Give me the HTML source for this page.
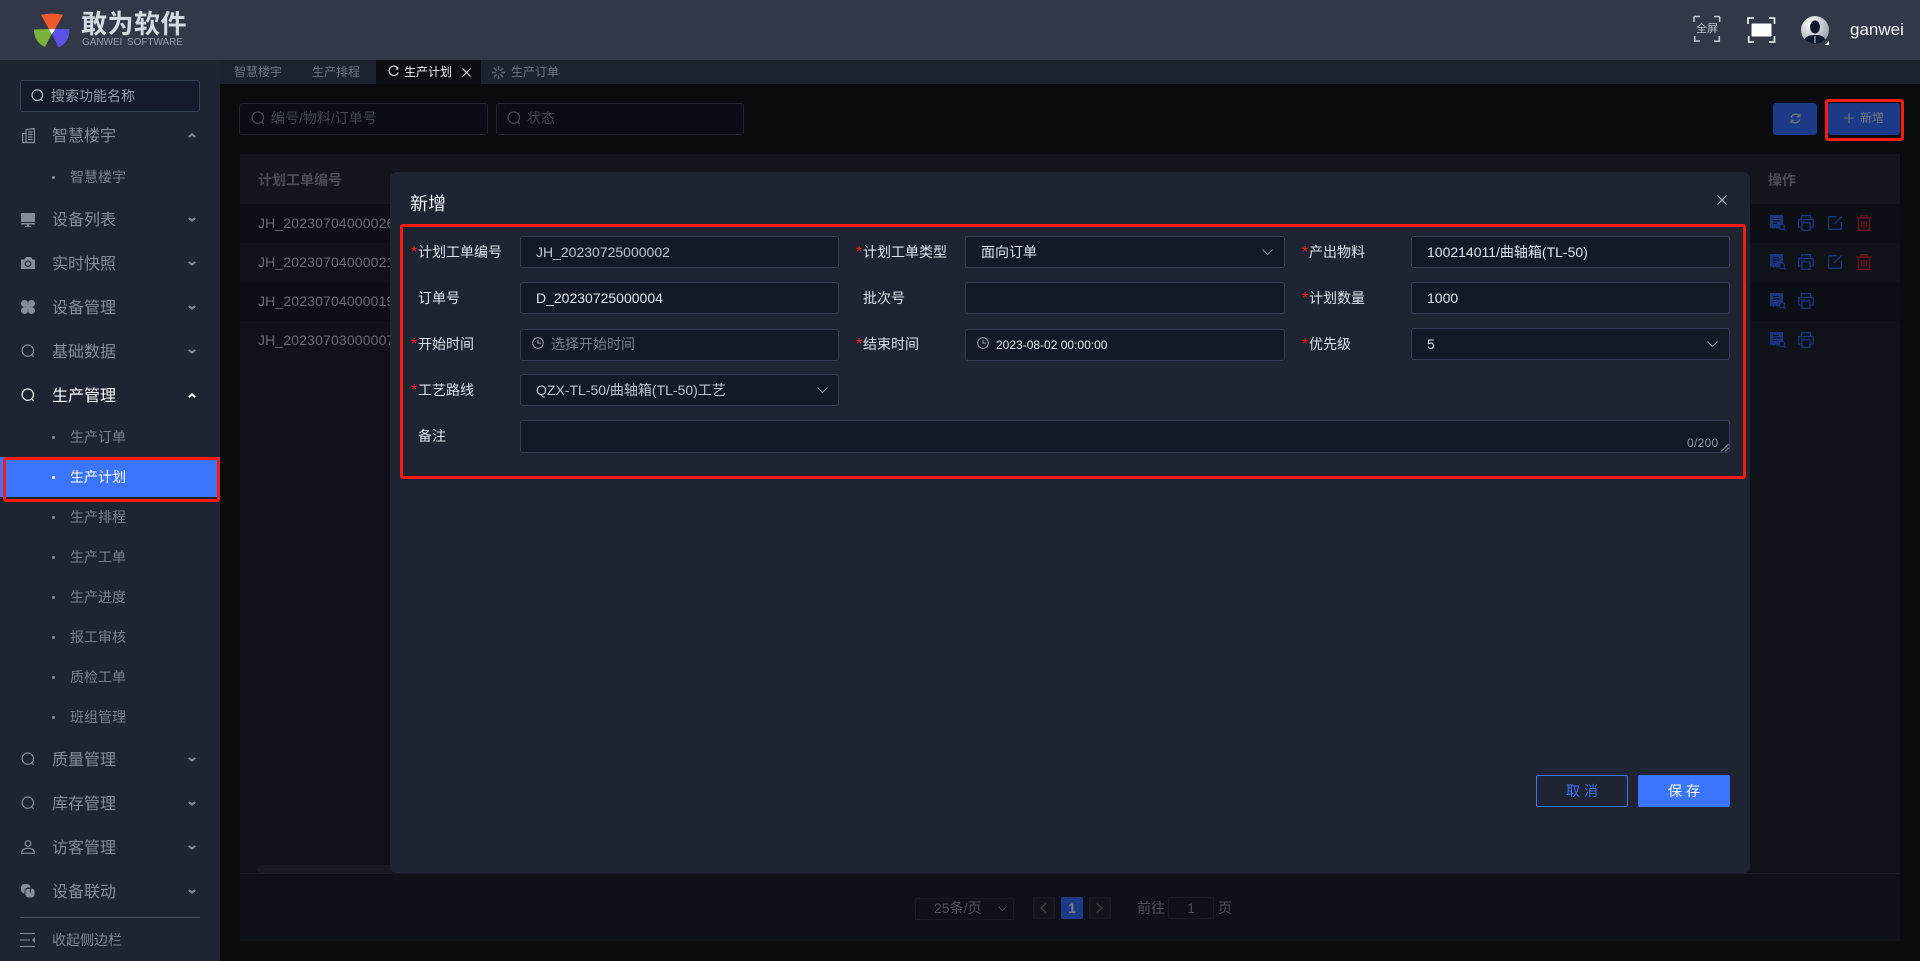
<!DOCTYPE html>
<html lang="zh-CN"><head><meta charset="utf-8"><title>生产计划</title>
<style>
html,body{margin:0;padding:0;width:1920px;height:961px;overflow:hidden;background:#090b0f}
body{position:relative;font-family:"Liberation Sans","Noto Sans CJK SC",sans-serif;font-size:14px}
div,span.a,svg.a{position:absolute}
.t{position:absolute;white-space:nowrap;line-height:20px;height:20px}
.m{left:52px;font-size:16px;color:#868c99;margin-top:2px}
.s{left:70px;font-size:14px;color:#78808e}
.b{position:absolute;left:52px;width:3px;height:3px;border-radius:50%;background:#878d99}
.ch{position:absolute;left:188px;width:8px;height:5px}
.ch path{stroke-width:2.500}
.inp{position:absolute;box-sizing:border-box;height:32px;background:#131927;border:1px solid #343d53;border-radius:3px}
.l{position:absolute;white-space:nowrap;line-height:20px;color:#dde2ea;font-size:14px}
.st{position:absolute;white-space:nowrap;line-height:20px;color:#ff1a1a;font-size:16px}
.v{position:absolute;white-space:nowrap;line-height:20px;font-size:14px;color:#dfe4ec}
.row{position:absolute;left:240px;width:1660px;height:39px}
.id{position:absolute;left:258px;white-space:nowrap;color:#696c73;font-size:14px;line-height:20px;letter-spacing:.15px}
.red{position:absolute;box-sizing:border-box;border:3px solid #fb1c10;border-radius:3px}
svg{overflow:visible}
</style></head><body>
<svg width="0" height="0" style="position:absolute">
<defs>
<symbol id="sr" viewBox="0 0 14 14"><circle cx="6.800" cy="6.600" r="5.700" fill="none" stroke="currentColor" stroke-width="1.150"/><path d="M10.600 10.900l2 2" stroke="currentColor" stroke-width="1.150" fill="none"/></symbol>
<symbol id="doc" viewBox="0 0 16 16"><path d="M0 0h13v11l-1.500 3-2-1.500-2 1.500-2-1.500-2 1.500-2-1.500-1.500 1z" fill="#1a3580"/><path d="M3 3.500h6M3 6h7M3 8.500h4" stroke="#0c0f15" stroke-width="1"/><circle cx="12" cy="12" r="2.600" fill="#0c0f15" stroke="#1a3580" stroke-width="1.300"/><path d="M14 14l1.600 1.600" stroke="#1a3580" stroke-width="1.300"/></symbol>
<symbol id="pr" viewBox="0 0 16 16"><g fill="none" stroke="#1a3580" stroke-width="1.300"><path d="M3.500 4.500V.7h9v3.800"/><path d="M4 12H.7V4.500h14.600V12H12"/><rect x="4" y="7.800" width="8" height="7.500"/><path d="M3 6.500h1M5.500 6.500h1"/></g></symbol>
<symbol id="ed" viewBox="0 0 14 14"><g fill="none" stroke="#1a3580" stroke-width="1.300"><path d="M8.500.7H1.500a.8.8 0 0 0-.8.8v11a.8.8 0 0 0 .8.8h11a.8.8 0 0 0 .8-.8V6"/><path d="M13.600.6L6.200 8"/></g></symbol>
<symbol id="tr" viewBox="0 0 16 16"><g fill="none" stroke="#6e1420" stroke-width="1.300"><path d="M.3 3h15.400"/><path d="M5 3V.8h6V3"/><path d="M2.500 3v12.300h11V3"/><path d="M5.500 6v6.500M8 6v6.500M10.500 6v6.500"/></g></symbol>
<symbol id="ck" viewBox="0 0 12 12"><circle cx="6" cy="6" r="5.300" fill="none" stroke="#8b92a0" stroke-width="1.100"/><path d="M6 2.800V6.200H9" fill="none" stroke="#8b92a0" stroke-width="1.100"/></symbol>
</defs>
</svg>

<!-- main area -->
<div style="left:220px;top:60px;width:1700px;height:24px;background:#1d2230"></div>
<div style="left:240px;top:154px;width:1660px;height:787px;background:#0f1218"></div>
<div style="left:240px;top:154px;width:1660px;height:50px;background:#13161d"></div>
<div class="row" style="top:204px;background:#0c0f15"></div>
<div class="row" style="top:243px;background:#0f1218"></div>
<div class="row" style="top:282px;background:#0c0f15"></div>
<div class="row" style="top:321px;background:#0f1218"></div>
<div class="id" style="top:170px;font-weight:bold;color:#4a4d54;letter-spacing:0">计划工单编号</div>
<div class="id" style="top:213px">JH_20230704000026</div>
<div class="id" style="top:252px">JH_20230704000021</div>
<div class="id" style="top:291px">JH_20230704000019</div>
<div class="id" style="top:330px">JH_20230703000007</div>
<div class="t" style="left:1768px;top:170px;font-weight:bold;color:#4a4d54">操作</div>

<svg class="a" style="left:1770px;top:215px" width="16" height="16"><use href="#doc"/></svg>
<svg class="a" style="left:1798px;top:215px" width="16" height="16"><use href="#pr"/></svg>
<svg class="a" style="left:1828px;top:216px" width="14" height="14"><use href="#ed"/></svg>
<svg class="a" style="left:1856px;top:215px" width="16" height="16"><use href="#tr"/></svg>
<svg class="a" style="left:1770px;top:254px" width="16" height="16"><use href="#doc"/></svg>
<svg class="a" style="left:1798px;top:254px" width="16" height="16"><use href="#pr"/></svg>
<svg class="a" style="left:1828px;top:255px" width="14" height="14"><use href="#ed"/></svg>
<svg class="a" style="left:1856px;top:254px" width="16" height="16"><use href="#tr"/></svg>
<svg class="a" style="left:1770px;top:293px" width="16" height="16"><use href="#doc"/></svg>
<svg class="a" style="left:1798px;top:293px" width="16" height="16"><use href="#pr"/></svg>
<svg class="a" style="left:1770px;top:332px" width="16" height="16"><use href="#doc"/></svg>
<svg class="a" style="left:1798px;top:332px" width="16" height="16"><use href="#pr"/></svg>

<div style="left:257px;top:865px;width:200px;height:8px;background:#16191f;border-radius:4px"></div>
<div style="left:240px;top:873px;width:1660px;height:68px;background:#0e1117;border-top:1px solid #191c23;box-sizing:border-box"></div>

<!-- filters -->
<div style="left:239px;top:103px;width:249px;height:32px;box-sizing:border-box;border:1px solid #20242d;border-radius:3px;background:#0a0d13"></div>
<div style="left:496px;top:103px;width:248px;height:32px;box-sizing:border-box;border:1px solid #20242d;border-radius:3px;background:#0a0d13"></div>
<svg class="a" style="left:251px;top:111px;color:#474c55" width="14" height="14"><use href="#sr"/></svg>
<div class="t" style="left:271px;top:108px;color:#41464f">编号/物料/订单号</div>
<svg class="a" style="left:507px;top:111px;color:#474c55" width="14" height="14"><use href="#sr"/></svg>
<div class="t" style="left:527px;top:108px;color:#41464f">状态</div>

<!-- buttons -->
<div style="left:1773px;top:103px;width:44px;height:32px;background:#1c3a85;border-radius:3px"></div>
<svg class="a" style="left:1790px;top:113px" width="11" height="11" viewBox="0 0 12 12"><path d="M1.500 5A4.600 4.600 0 0 1 10 3.500M10.500 7A4.600 4.600 0 0 1 2 8.500" fill="none" stroke="#6d7480" stroke-width="1.500"/><path d="M10.800 1v3.200H7.600M1.200 11V7.800H4.400" fill="none" stroke="#6d7480" stroke-width="1.300"/></svg>
<div style="left:1828px;top:103px;width:72px;height:32px;background:#1c3a85;border-radius:3px"></div>
<svg class="a" style="left:1844px;top:113px" width="10" height="10"><path d="M5 0v10M0 5h10" stroke="#6d7480" stroke-width="1.100"/></svg>
<div class="t" style="left:1860px;top:108px;font-size:12px;color:#727885">新增</div>
<div class="red" style="left:1825px;top:99px;width:79px;height:42px"></div>

<!-- pagination -->
<div style="left:915px;top:898px;width:99px;height:22px;box-sizing:border-box;border:1px solid #181b22;border-radius:2px"></div>
<div class="t" style="left:934px;top:898px;font-size:14px;color:#4f5258">25条/页</div>
<svg class="a" style="left:998px;top:906px" width="9" height="5"><path d="M.5.500l4 4 4-4" fill="none" stroke="#4a4d53"/></svg>
<div style="left:1033px;top:897px;width:22px;height:22px;box-sizing:border-box;border:1px solid #171a20;border-radius:2px;background:#12141a"></div>
<svg class="a" style="left:1040px;top:903px" width="7" height="10"><path d="M6 .500L1 5l5 4.500" fill="none" stroke="#3e4147" stroke-width="1.300"/></svg>
<div style="left:1061px;top:897px;width:22px;height:22px;background:#1c3a85;border-radius:2px;color:#7a8088;font-weight:bold;text-align:center;line-height:23px;font-size:14px">1</div>
<div style="left:1089px;top:897px;width:22px;height:22px;box-sizing:border-box;border:1px solid #171a20;border-radius:2px;background:#12141a"></div>
<svg class="a" style="left:1096px;top:903px" width="7" height="10"><path d="M1 .500L6 5 1 9.500" fill="none" stroke="#3e4147" stroke-width="1.300"/></svg>
<div class="t" style="left:1137px;top:898px;color:#4f5258">前往</div>
<div style="left:1168px;top:897px;width:46px;height:22px;box-sizing:border-box;border:1px solid #171a20;border-radius:2px;text-align:center;line-height:21px;color:#4f5258;font-size:14px">1</div>
<div class="t" style="left:1218px;top:898px;color:#4f5258">页</div>

<!-- tabs -->
<div class="t" style="left:234px;top:62px;font-size:12px;color:#6e7481">智慧楼宇</div>
<div class="t" style="left:312px;top:62px;font-size:12px;color:#6e7481">生产排程</div>
<div style="left:376px;top:60px;width:105px;height:24px;background:#0b0d13"></div>
<svg class="a" style="left:388px;top:66px" width="11" height="11" viewBox="0 0 11 11"><path d="M10 2.600A4.700 4.700 0 1 0 10.200 6.500" fill="none" stroke="#e2e6ec" stroke-width="1.200"/><path d="M10.300 .6v3h-3z" fill="#e2e6ec"/></svg>
<div class="t" style="left:404px;top:62px;font-size:12px;color:#eef1f5">生产计划</div>
<svg class="a" style="left:462px;top:68px" width="9" height="9"><path d="M.5.500l8 8M8.500.500l-8 8" stroke="#dfe3ea" stroke-width="1.200"/></svg>
<svg class="a" style="left:492px;top:66px" width="13" height="13" viewBox="0 0 12 12"><path d="M6 0v3.500M6 8.500V12M0 6h3.500M8.500 6H12M1.800 1.800l2.500 2.500M7.700 7.700l2.500 2.500M10.200 1.800L7.700 4.300M4.300 7.700l-2.500 2.500" stroke="#5f6572" stroke-width="1.400"/></svg>
<div class="t" style="left:511px;top:62px;font-size:12px;color:#6e7481">生产订单</div>

<!-- header -->
<div style="left:0;top:0;width:1920px;height:60px;background:#333849"></div>
<svg class="a" style="left:34px;top:13px" width="36" height="35" viewBox="0 0 36 35">
<path d="M7 2Q18-1 29 2L20.500 17H15.500Z" fill="#f15a2c"/>
<path d="M0 16.500L14 16 18 20.500 11 34Q0 29 0 16.500Z" fill="#7ab13a"/>
<path d="M35.500 16L21 16 18 20.500 24.500 34.500Q35.500 29.500 35.500 16Z" fill="#5b52e8"/>
<path d="M14.500 16.200h6.700l-3.300 4.800z" fill="#fff"/>
</svg>
<div class="t" style="left:81px;top:11px;height:26px;line-height:26px;font-size:26px;font-weight:bold;color:#d5d9e1;letter-spacing:.5px">敢为软件</div>
<div class="t" style="left:82px;top:36px;height:14px;line-height:14px;font-size:10px;color:#989eab;word-spacing:2px;letter-spacing:-.05px">GANWEI SOFTWARE</div>

<svg class="a" style="left:1694px;top:16px" width="26" height="26" viewBox="0 0 26 26"><path d="M0 6V1.200A1 1 0 0 1 1 .5H6M20 .5h5a1 1 0 0 1 .7.700V6M.7 20v5H6M20 25.300h5.300V20" fill="none" stroke="#c5cad4" stroke-width="1.500"/></svg>
<div class="t" style="left:1696px;top:19px;font-size:11px;color:#bfc3cc;letter-spacing:0">全屏</div>
<svg class="a" style="left:1748px;top:17px" width="27" height="26" viewBox="0 0 27 26"><path d="M0 7V1h6M21 1h5.500v6M.7 19v6H6M21 25h5.500v-6" fill="none" stroke="#fff" stroke-width="1.600"/><rect x="3.500" y="6.500" width="20" height="13" rx="1" fill="#fff"/></svg>
<svg class="a" style="left:1801px;top:16px" width="30" height="30" viewBox="0 0 30 30">
<defs><radialGradient id="av" cx=".35" cy=".3" r=".8"><stop offset="0" stop-color="#fff"/><stop offset="1" stop-color="#9298a6"/></radialGradient><clipPath id="cp"><circle cx="14" cy="14" r="14"/></clipPath></defs>
<circle cx="14" cy="14" r="14" fill="url(#av)"/>
<g clip-path="url(#cp)" fill="#10182e"><ellipse cx="14" cy="11" rx="5" ry="6.500"/><path d="M3 28c0-7 4-9 11-9s11 2 11 9z"/></g>
<path d="M14 20v7" stroke="#cfd3da" stroke-width="1"/>
<path d="M28 25v4h-4z" fill="#fff"/></svg>
<div class="t" style="left:1850px;top:20px;font-size:17px;color:#f3f5f8">ganwei</div>

<!-- sidebar -->
<div style="left:0;top:60px;width:220px;height:901px;background:#1f2433"></div>
<div style="left:20px;top:80px;width:180px;height:32px;box-sizing:border-box;background:#151b2b;border:1px solid #3a4459;border-radius:3px"></div>
<svg class="a" style="left:31px;top:89px;color:#c5cad4" width="13" height="13"><use href="#sr"/></svg>
<div class="t" style="left:51px;top:86px;color:#9299a6">搜索功能名称</div>

<svg class="a" style="left:22px;top:128px" width="13" height="15" viewBox="0 0 13 15"><g fill="none" stroke="#868c99" stroke-width="1.200"><path d="M.6 14.500V5.500H4M4 14.500V1.500L12.400.6V14.500M0 14.500h13"/><path d="M6 4h4.500M6 6.500h4.500M6 9h4.500M6 11.500h4.500"/></g></svg>
<div class="t m" style="top:125px">智慧楼宇</div>
<svg class="ch" style="top:133px" viewBox="0 0 10 6"><path d="M1 5l4-3.500L9 5" fill="none" stroke="#868c99" stroke-width="2"/></svg>
<div class="b" style="top:176px"></div><div class="t s" style="top:167px">智慧楼宇</div>

<svg class="a" style="left:21px;top:213px" width="14" height="14" viewBox="0 0 14 14"><path d="M0 1a1 1 0 0 1 1-1h12a1 1 0 0 1 1 1v8H0z" fill="#868c99"/><path d="M0 10h14v1.500H0zM6 11.500h2v1.500H6zM4 13h6v1H4z" fill="#868c99"/></svg>
<div class="t m" style="top:209px">设备列表</div>
<svg class="ch" style="top:217px" viewBox="0 0 10 6"><path d="M1 1l4 3.500L9 1" fill="none" stroke="#868c99" stroke-width="2"/></svg>

<svg class="a" style="left:21px;top:257px" width="14" height="12" viewBox="0 0 14 12"><path d="M0 2.500h3.500L5 0h5l1.500 2.500H14V12H0z" fill="#868c99"/><circle cx="7" cy="6.800" r="2.700" fill="none" stroke="#1f2433" stroke-width="1.200"/></svg>
<div class="t m" style="top:253px">实时快照</div>
<svg class="ch" style="top:261px" viewBox="0 0 10 6"><path d="M1 1l4 3.500L9 1" fill="none" stroke="#868c99" stroke-width="2"/></svg>

<svg class="a" style="left:21px;top:300px" width="14" height="14" viewBox="0 0 14 14"><g fill="#868c99"><circle cx="3.500" cy="3.500" r="3.500"/><circle cx="10.500" cy="3.500" r="3.500"/><circle cx="3.500" cy="10.500" r="3.500"/><circle cx="10.500" cy="10.500" r="3.500"/><rect x="5" y="5" width="4" height="4"/></g></svg>
<div class="t m" style="top:297px">设备管理</div>
<svg class="ch" style="top:305px" viewBox="0 0 10 6"><path d="M1 1l4 3.500L9 1" fill="none" stroke="#868c99" stroke-width="2"/></svg>

<svg class="a" style="left:21px;top:344px;color:#868c99" width="14" height="14"><use href="#sr"/></svg>
<div class="t m" style="top:341px">基础数据</div>
<svg class="ch" style="top:349px" viewBox="0 0 10 6"><path d="M1 1l4 3.500L9 1" fill="none" stroke="#868c99" stroke-width="2"/></svg>

<svg class="a" style="left:21px;top:388px;color:#fff" width="14" height="14"><use href="#sr"/></svg>
<div class="t m" style="top:385px;color:#fff">生产管理</div>
<svg class="ch" style="top:393px" viewBox="0 0 10 6"><path d="M1 5l4-3.500L9 5" fill="none" stroke="#fff" stroke-width="2"/></svg>

<div class="b" style="top:436px"></div><div class="t s" style="top:427px">生产订单</div>
<div style="left:0;top:457px;width:220px;height:40px;background:#3b74fe"></div>
<div class="b" style="top:476px;background:#fff"></div><div class="t s" style="top:467px;color:#fff">生产计划</div>
<div class="red" style="left:3px;top:457px;width:217px;height:45px"></div>
<div class="b" style="top:516px"></div><div class="t s" style="top:507px">生产排程</div>
<div class="b" style="top:556px"></div><div class="t s" style="top:547px">生产工单</div>
<div class="b" style="top:596px"></div><div class="t s" style="top:587px">生产进度</div>
<div class="b" style="top:636px"></div><div class="t s" style="top:627px">报工审核</div>
<div class="b" style="top:676px"></div><div class="t s" style="top:667px">质检工单</div>
<div class="b" style="top:716px"></div><div class="t s" style="top:707px">班组管理</div>

<svg class="a" style="left:21px;top:752px;color:#868c99" width="14" height="14"><use href="#sr"/></svg>
<div class="t m" style="top:749px">质量管理</div>
<svg class="ch" style="top:757px" viewBox="0 0 10 6"><path d="M1 1l4 3.500L9 1" fill="none" stroke="#868c99" stroke-width="2"/></svg>
<svg class="a" style="left:21px;top:796px;color:#868c99" width="14" height="14"><use href="#sr"/></svg>
<div class="t m" style="top:793px">库存管理</div>
<svg class="ch" style="top:801px" viewBox="0 0 10 6"><path d="M1 1l4 3.500L9 1" fill="none" stroke="#868c99" stroke-width="2"/></svg>
<svg class="a" style="left:21px;top:840px" width="14" height="14" viewBox="0 0 14 14"><circle cx="7" cy="3.500" r="2.800" fill="none" stroke="#868c99" stroke-width="1.200"/><path d="M.7 13.300c0-3.500 2-5 6.300-5s6.300 1.500 6.300 5z" fill="none" stroke="#868c99" stroke-width="1.200"/></svg>
<div class="t m" style="top:837px">访客管理</div>
<svg class="ch" style="top:845px" viewBox="0 0 10 6"><path d="M1 1l4 3.500L9 1" fill="none" stroke="#868c99" stroke-width="2"/></svg>
<svg class="a" style="left:21px;top:884px" width="14" height="14" viewBox="0 0 14 14"><rect x="0" y="0" width="9.500" height="9.500" rx="3.500" fill="#868c99"/><rect x="4" y="4" width="10" height="10" rx="3.500" fill="#868c99" stroke="#1f2433" stroke-width=".9"/><path d="M4.500 4.500h5v4" fill="none" stroke="#1f2433" stroke-width=".9"/></svg>
<div class="t m" style="top:881px">设备联动</div>
<svg class="ch" style="top:889px" viewBox="0 0 10 6"><path d="M1 1l4 3.500L9 1" fill="none" stroke="#868c99" stroke-width="2"/></svg>
<div style="left:20px;top:917px;width:180px;height:1px;background:#4a5060"></div>
<svg class="a" style="left:20px;top:933px" width="15" height="14" viewBox="0 0 15 14"><path d="M0 .500h15M0 7h10M0 13.500h15" stroke="#868c99" stroke-width="1.100"/><path d="M15 4v6l-3-3z" fill="#868c99"/></svg>
<div class="t" style="left:52px;top:930px;color:#7f8694">收起侧边栏</div>

<!-- modal -->
<div style="left:390px;top:172px;width:1360px;height:701px;background:#1f2433;border-radius:7px"></div>
<div class="t" style="left:410px;top:192px;height:25px;line-height:25px;font-size:18px;color:#eef1f5">新增</div>
<svg class="a" style="left:1717px;top:195px" width="10" height="10"><path d="M.5.500l9 9M9.500.500l-9 9" stroke="#b6bcc8" stroke-width="1.200"/></svg>
<div class="red" style="left:400px;top:224px;width:1346px;height:255px"></div>

<div class="st" style="left:411px;top:243px">*</div><div class="l" style="left:418px;top:242px">计划工单编号</div>
<div class="inp" style="left:520px;top:236px;width:319px"></div><div class="v" style="left:536px;top:242px;color:#bcc3ce">JH_20230725000002</div>
<div class="st" style="left:856px;top:243px">*</div><div class="l" style="left:863px;top:242px">计划工单类型</div>
<div class="inp" style="left:965px;top:236px;width:320px"></div><div class="v" style="left:981px;top:242px">面向订单</div>
<svg class="a" style="left:1262px;top:249px" width="11" height="6"><path d="M.5.500l5 5 5-5" fill="none" stroke="#8b93a3" stroke-width="1.100"/></svg>
<div class="st" style="left:1302px;top:243px">*</div><div class="l" style="left:1309px;top:242px">产出物料</div>
<div class="inp" style="left:1411px;top:236px;width:319px"></div><div class="v" style="left:1427px;top:242px">100214011/曲轴箱(TL-50)</div>

<div class="l" style="left:418px;top:288px">订单号</div>
<div class="inp" style="left:520px;top:282px;width:319px"></div><div class="v" style="left:536px;top:288px">D_20230725000004</div>
<div class="l" style="left:863px;top:288px">批次号</div>
<div class="inp" style="left:965px;top:282px;width:320px"></div>
<div class="st" style="left:1302px;top:289px">*</div><div class="l" style="left:1309px;top:288px">计划数量</div>
<div class="inp" style="left:1411px;top:282px;width:319px"></div><div class="v" style="left:1427px;top:288px">1000</div>

<div class="st" style="left:411px;top:335px">*</div><div class="l" style="left:418px;top:334px">开始时间</div>
<div class="inp" style="left:520px;top:329px;width:319px"></div>
<svg class="a" style="left:532px;top:337px" width="12" height="12"><use href="#ck"/></svg>
<div class="v" style="left:551px;top:334px;color:#777d8a">选择开始时间</div>
<div class="st" style="left:856px;top:335px">*</div><div class="l" style="left:863px;top:334px">结束时间</div>
<div class="inp" style="left:965px;top:329px;width:320px"></div>
<svg class="a" style="left:977px;top:337px" width="12" height="12"><use href="#ck"/></svg>
<div class="v" style="left:996px;top:335px;font-size:12px;color:#e6eaf0">2023-08-02 00:00:00</div>
<div class="st" style="left:1302px;top:335px">*</div><div class="l" style="left:1309px;top:334px">优先级</div>
<div class="inp" style="left:1411px;top:328px;width:319px"></div><div class="v" style="left:1427px;top:334px">5</div>
<svg class="a" style="left:1707px;top:341px" width="11" height="6"><path d="M.5.500l5 5 5-5" fill="none" stroke="#8b93a3" stroke-width="1.100"/></svg>

<div class="st" style="left:411px;top:381px">*</div><div class="l" style="left:418px;top:380px">工艺路线</div>
<div class="inp" style="left:520px;top:374px;width:319px"></div><div class="v" style="left:536px;top:380px;color:#bcc3ce">QZX-TL-50/曲轴箱(TL-50)工艺</div>
<svg class="a" style="left:817px;top:387px" width="11" height="6"><path d="M.5.500l5 5 5-5" fill="none" stroke="#8b93a3" stroke-width="1.100"/></svg>

<div class="l" style="left:418px;top:426px">备注</div>
<div class="inp" style="left:520px;top:420px;width:1210px;height:33px"></div>
<div class="t" style="left:1687px;top:433px;font-size:12px;color:#8f96a3;letter-spacing:.3px">0/200</div>
<svg class="a" style="left:1721px;top:444px" width="8" height="8"><path d="M0 7.500L7.500 0M4 7.500L7.500 4" stroke="#aab0bc" stroke-width=".8"/></svg>

<div style="left:1536px;top:775px;width:92px;height:32px;box-sizing:border-box;border:1px solid #3b74fe;border-radius:2px;color:#3b74fe;text-align:center;line-height:30px;font-size:14px;letter-spacing:4px;text-indent:4px">取消</div>
<div style="left:1638px;top:775px;width:92px;height:32px;background:#3b74fe;border-radius:2px;color:#fff;text-align:center;line-height:32px;font-size:14px;letter-spacing:4px;text-indent:4px">保存</div>
</body></html>
